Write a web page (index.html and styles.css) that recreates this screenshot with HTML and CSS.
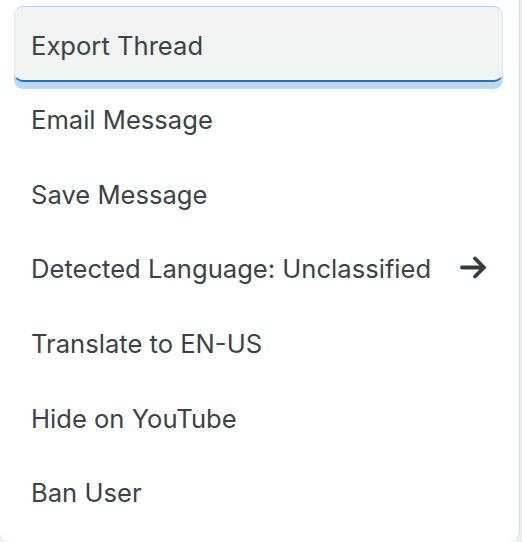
FILE: index.html
```html
<!doctype html>
<html>
  <head>
    <title>message menu</title>
    <meta charset="utf-8">
    <link rel="stylesheet" href="styles.css">
  </head>
  <body>
    <div class="menu">
      <div class="item active">Export Thread</div>
      <div class="item">Email Message</div>
      <div class="item">Save Message</div>
      <div class="item sub">
        <span>Detected Language: Unclassified</span>
        <svg class="arrow" width="27" height="23" viewBox="0 0 27 23">
          <path d="M2 11.5 H24 M15 2.5 L24 11.5 L15 20.5" fill="none" stroke="#323b3d" stroke-width="3.8" stroke-linecap="round" stroke-linejoin="round"/>
        </svg>
      </div>
      <div class="item">Translate to EN-US</div>
      <div class="item">Hide on YouTube</div>
      <div class="item">Ban User</div>
    </div>
  </body>
</html>
```

FILE: styles.css
```css
html, body {
  margin: 0;
  height: 100%;
}
body {
  background: #eceeef;
  overflow: hidden;
}
.menu {
  box-sizing: border-box;
  width: 520px;
  height: 542px;
  padding: 6px 16px 0 14px;
  background: #fff;
  border-right: 1px solid #d7dadb;
  border-radius: 0 0 10px 10px;
  display: flex;
  flex-direction: column;
  font-family: "Inter", "Liberation Sans", sans-serif;
  font-size: 25.6px;
  color: #3a4345;
}
.item {
  height: 74.7px;
  flex: none;
  box-sizing: border-box;
  padding: 3px 16px 0 17px;
  display: flex;
  align-items: center;
  border-radius: 9px;
}
.item.active {
  height: 76px;
  margin-bottom: -1.3px;
  background: #f2f3f3;
  border: 1px solid #e2e6ea;
  border-top-color: #b9d2ea;
  border-bottom: 2px solid #1c74c6;
  box-shadow: 0 7px 0 #c0d7ec;
  padding-left: 16px;
}
.item.sub {
  justify-content: space-between;
}
.arrow {
  display: block;
  margin-top: -3px;
}
```
